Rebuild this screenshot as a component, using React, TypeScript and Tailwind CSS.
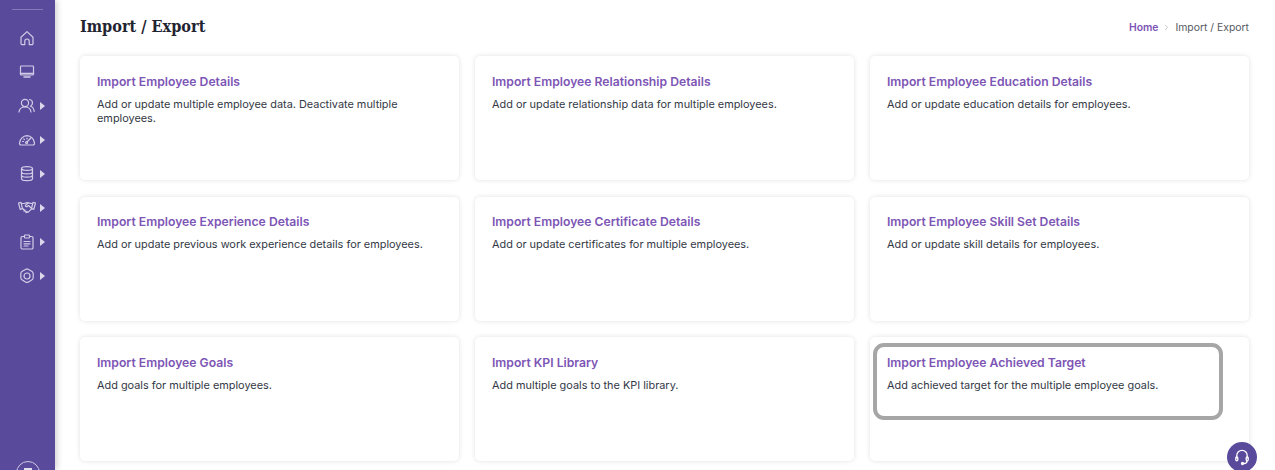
import { ChevronRight } from 'lucide-react'
import type { ReactNode } from 'react'

const cards = [
  { title: 'Import Employee Details', text: 'Add or update multiple employee data. Deactivate multiple employees.' },
  { title: 'Import Employee Relationship Details', text: 'Add or update relationship data for multiple employees.' },
  { title: 'Import Employee Education Details', text: 'Add or update education details for employees.' },
  { title: 'Import Employee Experience Details', text: 'Add or update previous work experience details for employees.' },
  { title: 'Import Employee Certificate Details', text: 'Add or update certificates for multiple employees.' },
  { title: 'Import Employee Skill Set Details', text: 'Add or update skill details for employees.' },
  { title: 'Import Employee Goals', text: 'Add goals for multiple employees.' },
  { title: 'Import KPI Library', text: 'Add multiple goals to the KPI library.' },
  { title: 'Import Employee Achieved Target', text: 'Add achieved target for the multiple employee goals.', highlight: true },
]

function Icon({ children }: { children: ReactNode }) {
  return (
    <svg width="18" height="18" viewBox="0 0 18 18" fill="none" stroke="currentColor" strokeWidth="1.2" strokeLinecap="round" strokeLinejoin="round">
      {children}
    </svg>
  )
}

const HomeIcon = (
  <Icon>
    <path d="M3 8.2 9 2.6l6 5.6v6.2a1.2 1.2 0 0 1-1.2 1.2h-2.6v-3.4a2.2 2.2 0 0 0-4.4 0v3.4H4.2A1.2 1.2 0 0 1 3 14.400z" />
  </Icon>
)

const MonitorIcon = (
  <Icon>
    <rect x="2.500" y="3" width="13" height="9" rx="0.800" />
    <path d="M2.500 10.500h13M6 14h6" strokeWidth="1.500" />
  </Icon>
)

const UsersIcon = (
  <Icon>
    <circle cx="7" cy="6" r="3.600" />
    <path d="M1 15c.4-3 2.800-5 6-5s5.600 2 6 5" />
    <path d="M11.500 2.500c1.800.2 3 1.700 3 3.500 0 1.400-.8 2.600-2 3.200 2 .6 3.400 2.600 3.700 5.300" />
  </Icon>
)

const GaugeIcon = (
  <Icon>
    <path d="M3 14h12a1.500 1.500 0 0 0 1.400-2A7.800 7.800 0 0 0 9 4.700 7.800 7.800 0 0 0 1.600 12 1.500 1.500 0 0 0 3 14z" />
    <path d="M9 11 12.800 7M4.500 10.500h1M5.800 8l.6.6M9 7v1" />
    <circle cx="8.600" cy="11.500" r="1" />
  </Icon>
)

const DatabaseIcon = (
  <Icon>
    <ellipse cx="9" cy="3.500" rx="5.500" ry="1.900" />
    <path d="M3.500 3.500v10.200c0 1 2.500 1.900 5.500 1.900s5.500-.9 5.500-1.900V3.500" />
    <path d="M3.500 6.900c0 1 2.500 1.900 5.500 1.900s5.500-.9 5.500-1.900M3.500 10.300c0 1 2.500 1.900 5.500 1.900s5.500-.9 5.500-1.900" />
  </Icon>
)

const HandshakeIcon = (
  <Icon>
    <path d="M.500 4 3 3.300l1.500 6.400-2.300.6zM17.500 4 15 3.300l-1.500 6.400 2.300.6z" />
    <path d="M4 4.500h2.500L9 3.500l1.500.4-3 2.400c-.5.900.8 1.800 1.800 1.100l1.200-.9 3.200 3" />
    <path d="M11 4.100l3 .4M4.600 9.500l3.400 3.400c.8.700 1.600.7 2.300.2l3.300-3.200M7 11l-1 1M9 12.500l-1 1" />
  </Icon>
)

const ClipboardIcon = (
  <Icon>
    <path d="M6.500 3.500H4.200A1.200 1.200 0 0 0 3 4.700v10.100A1.200 1.200 0 0 0 4.200 16h9.600a1.200 1.200 0 0 0 1.200-1.200V4.700a1.200 1.200 0 0 0-1.200-1.200h-2.300" />
    <rect x="6.500" y="2" width="5" height="3" rx="0.700" />
    <path d="M6 8.500h6M6 10.800h6M6 13h4" />
  </Icon>
)

const GearIcon = (
  <Icon>
    <path d="M7.500 2.400a3 3 0 0 1 3 0l3.200 1.900a3 3 0 0 1 1.500 2.600v3.600a3 3 0 0 1-1.500 2.600l-3.200 1.900a3 3 0 0 1-3 0l-3.200-1.900a3 3 0 0 1-1.500-2.600V6.900a3 3 0 0 1 1.500-2.600z" />
    <circle cx="9" cy="9" r="3" />
  </Icon>
)

function NavItem({ icon, caret }: { icon: ReactNode; caret?: boolean }) {
  return (
    <div className="flex h-[34px] items-center pl-[18px] text-[#d2cde6]">
      {icon}
      {caret && <span className="ml-[4px] h-0 w-0 border-y-[4.5px] border-l-[5px] border-y-transparent border-l-[#dcd8ec]" />}
    </div>
  )
}

function Sidebar() {
  return (
    <aside className="relative z-10 flex h-[470px] w-[55px] shrink-0 flex-col overflow-hidden bg-[#5a4a9c] shadow-[2px_0_6px_rgba(0,0,0,0.18)]">
      <div className="mx-[12px] mt-[9px] h-px bg-[#8679b9]" />
      <div className="mt-[11px] flex flex-col">
        <NavItem icon={HomeIcon} />
        <NavItem icon={MonitorIcon} />
        <NavItem icon={UsersIcon} caret />
        <NavItem icon={GaugeIcon} caret />
        <NavItem icon={DatabaseIcon} caret />
        <NavItem icon={HandshakeIcon} caret />
        <NavItem icon={ClipboardIcon} caret />
        <NavItem icon={GearIcon} caret />
      </div>
      <div className="mt-auto mb-[-15px] ml-[16px] flex h-[24px] w-[24px] justify-center rounded-full border border-[#cfc9e4] pt-[6px]">
        <span className="h-[2px] w-[8px] bg-[#e4e0f0]" />
      </div>
    </aside>
  )
}

function ImportCard({ title, text, highlight }: { title: string; text: string; highlight?: boolean }) {
  return (
    <div className="relative h-[124px] rounded-[5px] bg-white px-[17px] pt-[16.500px] shadow-[0_0_5px_rgba(0,0,0,0.12)]">
      {highlight && <div className="absolute top-[6px] left-[3px] h-[77px] w-[350px] rounded-[11px] border-[4px] border-[#a6a6a6]" />}
      <h3 className="text-[12.200px] leading-[17px] font-semibold text-[#7d55b5]">{title}</h3>
      <p className="mt-[7px] text-[10.900px] leading-[14.500px] text-[#333845]">{text}</p>
    </div>
  )
}

export default function App() {
  return (
    <div className="relative flex h-[470px] w-[1275px] overflow-hidden bg-white font-['Inter','Liberation_Sans',sans-serif]">
      <Sidebar />
      <main className="flex-1 pt-[15px] pr-[26px] pl-[25px]">
        <div className="flex h-[24px] items-center justify-between">
          <h1 className="font-['DejaVu_Serif_Condensed','DejaVu_Serif',serif] text-[16.100px] font-semibold text-[#1f2430]">Import / Export</h1>
          <div className="mt-[1px] flex items-center text-[10.400px]">
            <span className="font-semibold text-[#7d55b5]">Home</span>
            <ChevronRight size={9} className="mx-[4px] text-[#b0b0b8]" />
            <span className="text-[#555a64]">Import / Export</span>
          </div>
        </div>
        <div className="mt-[17px] grid grid-cols-3 gap-x-[16px] gap-y-[16.500px]">
          {cards.map(card => (
            <ImportCard key={card.title} {...card} />
          ))}
        </div>
      </main>
      <div className="absolute top-[442px] left-[1227px] flex h-[30px] w-[30px] items-center justify-center rounded-full bg-[#5a4a9c] text-white">
        <svg width="18" height="18" viewBox="0 0 18 18" fill="none" stroke="currentColor" strokeWidth="1.300" strokeLinecap="round">
          <path d="M3.800 10V7.500a5.200 5.200 0 0 1 10.400 0V10" />
          <rect x="2.800" y="8.800" width="2" height="4" rx="1" />
          <rect x="13.200" y="8.800" width="2" height="4" rx="1" />
          <path d="M14 13c0 1.500-1.500 2.500-3 2.500" />
          <circle cx="9.500" cy="15.500" r="1" fill="currentColor" />
        </svg>
      </div>
    </div>
  )
}
